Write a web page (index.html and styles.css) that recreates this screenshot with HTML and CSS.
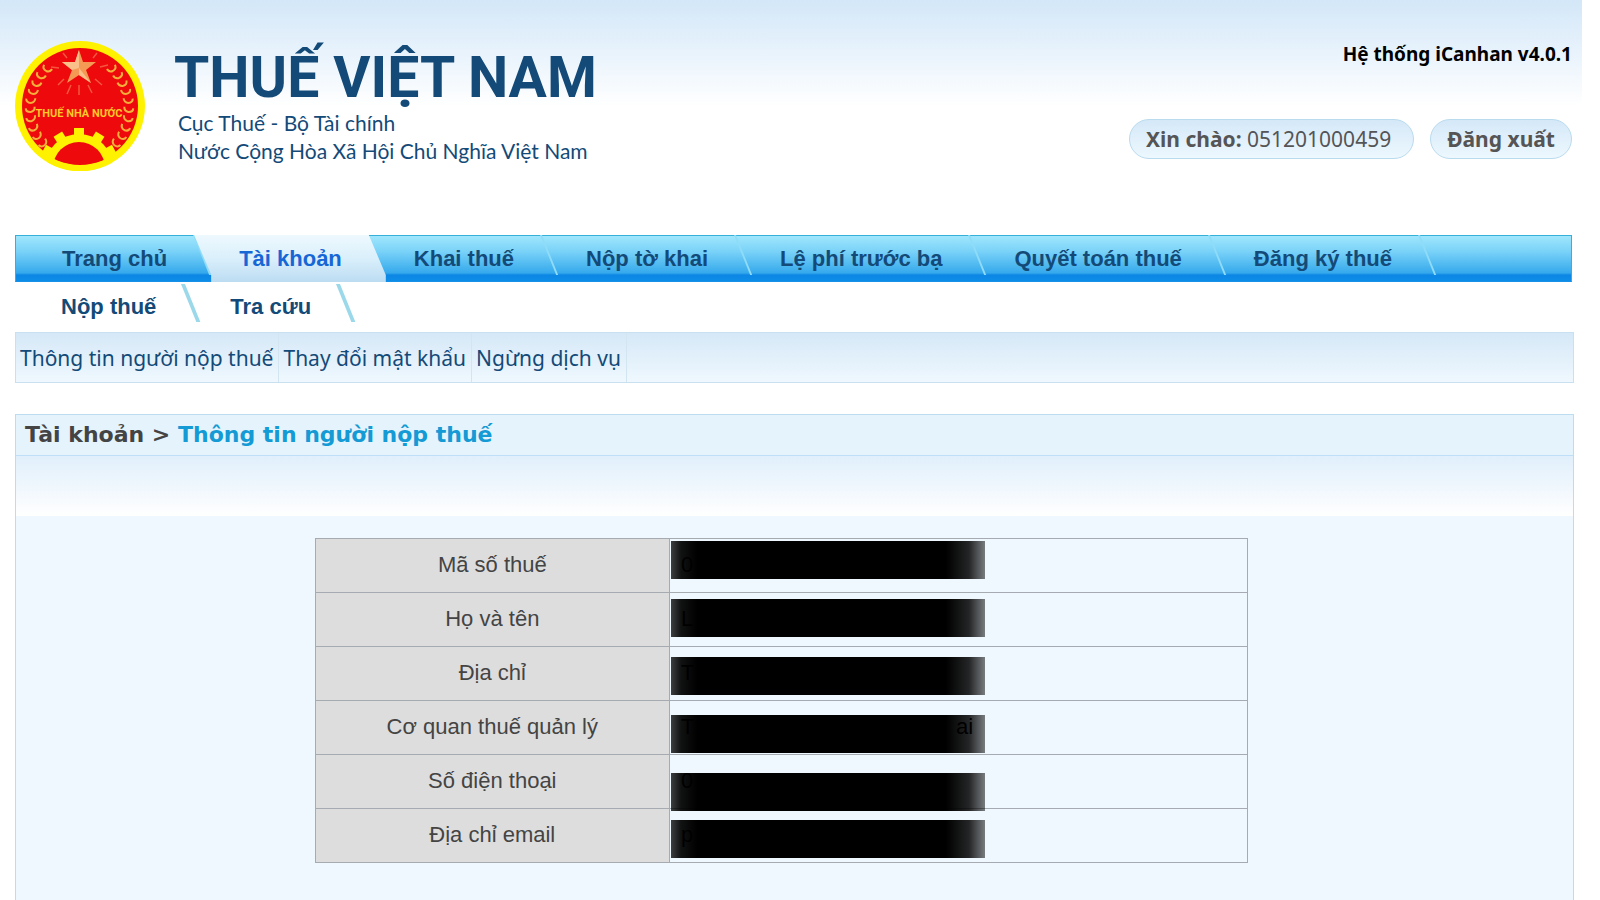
FILE: index.html
```html
<!DOCTYPE html>
<html lang="vi">
<head>
    <meta charset="UTF-8">
    <meta name="viewport" content="width=device-width, initial-scale=1.0">
    <title>Thuế Việt Nam - iCanhan</title>
    <link rel="stylesheet" href="styles.css">
</head>
<body>
    <header class="header">
        <div class="brand">
            <svg class="logo" viewBox="0 0 130 130" role="img" aria-label="Thuế Nhà Nước">
                <defs>
                    <path id="leaf" d="M0 0q-5 0-5-4M0 0q4-1 4-5" fill="none" stroke="#f5b03c" stroke-width="2"/>
                    <g id="branch">
                        <use href="#leaf" transform="translate(31 30) rotate(35)"/>
                        <use href="#leaf" transform="translate(25 37) rotate(28)"/>
                        <use href="#leaf" transform="translate(21 45) rotate(20)"/>
                        <use href="#leaf" transform="translate(18 53) rotate(12)"/>
                        <use href="#leaf" transform="translate(16 62) rotate(4)"/>
                        <use href="#leaf" transform="translate(16 71) rotate(-4)"/>
                        <use href="#leaf" transform="translate(17 80) rotate(-12)"/>
                        <use href="#leaf" transform="translate(20 89) rotate(-22)"/>
                        <use href="#leaf" transform="translate(24 97) rotate(-30)"/>
                        <use href="#leaf" transform="translate(30 104) rotate(-38)"/>
                    </g>
                    <clipPath id="disc"><circle cx="65" cy="65" r="59"/></clipPath>
                </defs>
                <circle cx="65" cy="65" r="65" fill="#fff200"/>
                <circle cx="65" cy="65" r="58" fill="#ee0a0c"/>
                <path d="M52 17l-4-5M44 27l-8-1M49 38l-6 6M56 44l-4 9M64 44v10M73 44l4 8M80 38l7 6M85 26l8-2M78 17l4-5" stroke="#f4563f" stroke-width="1.5"/>
                <path d="M64 9l4 12h13l-10 8 5 13-12-8-12 8 5-13-10-8h13z" fill="#f59a55"/>
                <path d="M64 9v18L57 29l-10-8h13zM64 27l12 15-12-8z" fill="#f9c08a"/>
                <use href="#branch"/>
                <use href="#branch" transform="matrix(-1 0 0 1 129 0)"/>
                <g clip-path="url(#disc)">
                    <g fill="#fff200">
                        <circle cx="64" cy="127" r="34"/>
                        <path id="tooth" d="M59 87h10v13H59z"/>
                        <use href="#tooth" transform="rotate(-32 64 127)"/>
                        <use href="#tooth" transform="rotate(32 64 127)"/>
                        <use href="#tooth" transform="rotate(-62 64 127)"/>
                        <use href="#tooth" transform="rotate(62 64 127)"/>
                    </g>
                    <circle cx="64" cy="127" r="26" fill="#ee0a0c"/>
                </g>
                <path d="M34 119A62 62 0 0 0 96 119" fill="none" stroke="#fff200" stroke-width="6"/>
                <text x="64" y="76" text-anchor="middle" class="logo-text">THUẾ NHÀ NƯỚC</text>
            </svg>
            <div class="brand-text">
                <h1>THUẾ VIỆT NAM</h1>
                <p>Cục Thuế - Bộ Tài chính</p>
                <p>Nước Cộng Hòa Xã Hội Chủ Nghĩa Việt Nam</p>
            </div>
        </div>
        <div class="user">
            <div class="version">Hệ thống iCanhan v4.0.1</div>
            <div class="user-row">
                <div class="pill"><b>Xin chào:</b> 051201000459</div>
                <button type="button" class="pill logout">Đăng xuất</button>
            </div>
        </div>
    </header>

    <nav class="main-nav">
        <a href="#">Trang chủ</a>
        <a href="#" class="active">Tài khoản</a>
        <a href="#">Khai thuế</a>
        <a href="#">Nộp tờ khai</a>
        <a href="#">Lệ phí trước bạ</a>
        <a href="#">Quyết toán thuế</a>
        <a href="#">Đăng ký thuế</a>
    </nav>
    <nav class="sub-nav">
        <a href="#">Nộp thuế</a>
        <a href="#">Tra cứu</a>
    </nav>
    <nav class="link-bar">
        <a href="#">Thông tin người nộp thuế</a>
        <a href="#">Thay đổi mật khẩu</a>
        <a href="#">Ngừng dịch vụ</a>
    </nav>

    <main class="panel">
        <h2 class="panel-title">Tài khoản &gt; <span>Thông tin người nộp thuế</span></h2>
        <div class="panel-body">
            <div class="info">
                <table>
                    <tr><th scope="row">Mã số thuế</th><td>0</td></tr>
                    <tr><th scope="row">Họ và tên</th><td>L</td></tr>
                    <tr><th scope="row">Địa chỉ</th><td>T</td></tr>
                    <tr><th scope="row">Cơ quan thuế quản lý</th><td><div class="ends"><span>T</span><span>ai</span></div></td></tr>
                    <tr><th scope="row">Số điện thoại</th><td>0</td></tr>
                    <tr><th scope="row">Địa chỉ email</th><td>p</td></tr>
                </table>
                <!-- personal data is covered -->
                <div class="masks">
                    <i></i><i></i><i></i><i></i><i></i><i></i>
                </div>
            </div>
        </div>
    </main>
</body>
</html>
```

FILE: styles.css
```css
* {
    box-sizing: border-box;
}

body {
    margin: 0;
    padding: 0 28px 0 15px;
    min-height: 100vh;
    display: flex;
    flex-direction: column;
    background: linear-gradient(#d3e7f8, #e3f0fb 40px, #fff 106px) no-repeat 0 0 / calc(100% - 18px) 106px #fff;
    font-family: "Liberation Sans", Arial, sans-serif;
    font-size: 22px;
    color: #444;
}

a {
    color: #134a78;
    text-decoration: none;
}

/* header */
.header {
    display: flex;
    justify-content: space-between;
    height: 235px;
    padding-top: 41px;
}

.brand {
    display: flex;
    gap: 29px;
}

.logo {
    width: 130px;
    height: 130px;
}

.logo-text {
    font: bold 11px Roboto, sans-serif;
    fill: #ffc928;
}

.brand-text {
    color: #134a78;
}

.brand-text h1 {
    margin: 0;
    font: bold 57px/62px Roboto, sans-serif;
    padding-top: 6px;
}

.brand-text p {
    margin: 0 0 0 4px;
    font: 21px/28px Lato, sans-serif;
}

.user {
    display: flex;
    flex-direction: column;
    align-items: flex-end;
    gap: 52px;
    color: #555;
}

.version {
    font: bold 19px/26px "Noto Sans", sans-serif;
    color: #000;
}

.user-row {
    display: flex;
    gap: 16px;
}

.pill {
    height: 40px;
    padding: 0 22px 0 16px;
    border: 1px solid #b9dbee;
    border-radius: 20px;
    background: linear-gradient(#d5e8f8, #edf8fe);
    font: 21px/38px "Noto Sans", sans-serif;
    color: #555;
}

.logout {
    padding: 0 16px;
    font-weight: bold;
}

/* main menu */
.main-nav {
    display: flex;
    height: 47px;
    padding-left: 1px;
    border: 1px solid #35b0d8;
    border-bottom-color: #1590e6;
    background: linear-gradient(#9fe6fc, #7bd3f8 15px, #35a9ec 37px, #0c86e4 39px, #0c8de8);
}

.main-nav a {
    position: relative;
    z-index: 0;
    padding: 0 27px 0 45px;
    font-weight: bold;
    line-height: 45px;
}

.main-nav a::after {
    content: "";
    position: absolute;
    top: -1px;
    right: -1px;
    width: 2px;
    height: 40px;
    background: #8fdcf8;
    transform: skewX(22deg);
    transform-origin: top;
}

.main-nav .active {
    color: #1766d6;
}

.main-nav .active::after {
    display: none;
}

.main-nav .active::before {
    content: "";
    position: absolute;
    z-index: -1;
    inset: -1px -17px -1px 0;
    background: linear-gradient(#eef9fe, #d9effb 24px, #bcdcf2);
    clip-path: polygon(0 0, calc(100% - 17px) 0, 100% 40px, 100% 100%, 17px 100%, 17px 40px);
}

.sub-nav {
    display: flex;
    height: 50px;
}

.sub-nav a {
    position: relative;
    padding: 0 28px 0 46px;
    font-weight: bold;
    line-height: 50px;
}

.sub-nav a::after {
    content: "";
    position: absolute;
    top: 2px;
    right: -1px;
    width: 4px;
    height: 38px;
    background: #9bd8ea;
    transform: skewX(22deg);
    transform-origin: top;
}

.link-bar {
    display: flex;
    height: 51px;
    margin-right: -2px;
    border: 1px solid #c8e0f0;
    background: linear-gradient(#d5e8f7, #eff8fe);
}

.link-bar a {
    padding: 0 5px 0 4px;
    border-right: 1px solid #d2e5f1;
    font: 21px/50px "Noto Sans", sans-serif;
}

/* content */
.panel {
    flex: 1;
    margin: 31px -2px 0 0;
    border: 1px solid #bcdcf0;
    border-bottom: 0;
    background: #f0f8ff;
}

.panel-title {
    margin: 0;
    padding-left: 9px;
    border-bottom: 1px solid #bfdff8;
    background: #e5f3fc;
    font: bold 22px/40px "DejaVu Sans", Verdana, sans-serif;
    color: #444;
}

.panel-title span {
    color: #149ad4;
}

.panel-body {
    padding: 82px 26px 38px 0;
    background: linear-gradient(#e0effb, #fff 60px, #f0f8ff 60px) no-repeat;
}

.info {
    position: relative;
    width: 61%;
    margin: 0 auto;
}

table {
    width: 100%;
    border-collapse: collapse;
}

th, td {
    height: 54px;
    padding: 0 11px 2px;
    border: 1px solid #a5abb0;
    font-weight: normal;
}

th {
    width: 38%;
    background: #ddd;
}

td {
    color: #000;
    text-align: left;
}

.ends {
    display: flex;
    justify-content: space-between;
    width: 292px;
}

.masks {
    position: absolute;
    top: 3px;
    left: 38%;
    width: 314px;
    margin-left: 2px;
    display: flex;
    flex-direction: column;
    gap: 20px;
}

.masks i {
    height: 38px;
    background: linear-gradient(90deg, rgba(0, 0, 0, .75), rgba(0, 0, 0, .93) 10px, #000 26px, #000 275px, rgba(0, 0, 0, .85) 298px, rgba(0, 0, 0, .5));
}

.masks i:last-child {
    margin-top: -11px;
}
```
